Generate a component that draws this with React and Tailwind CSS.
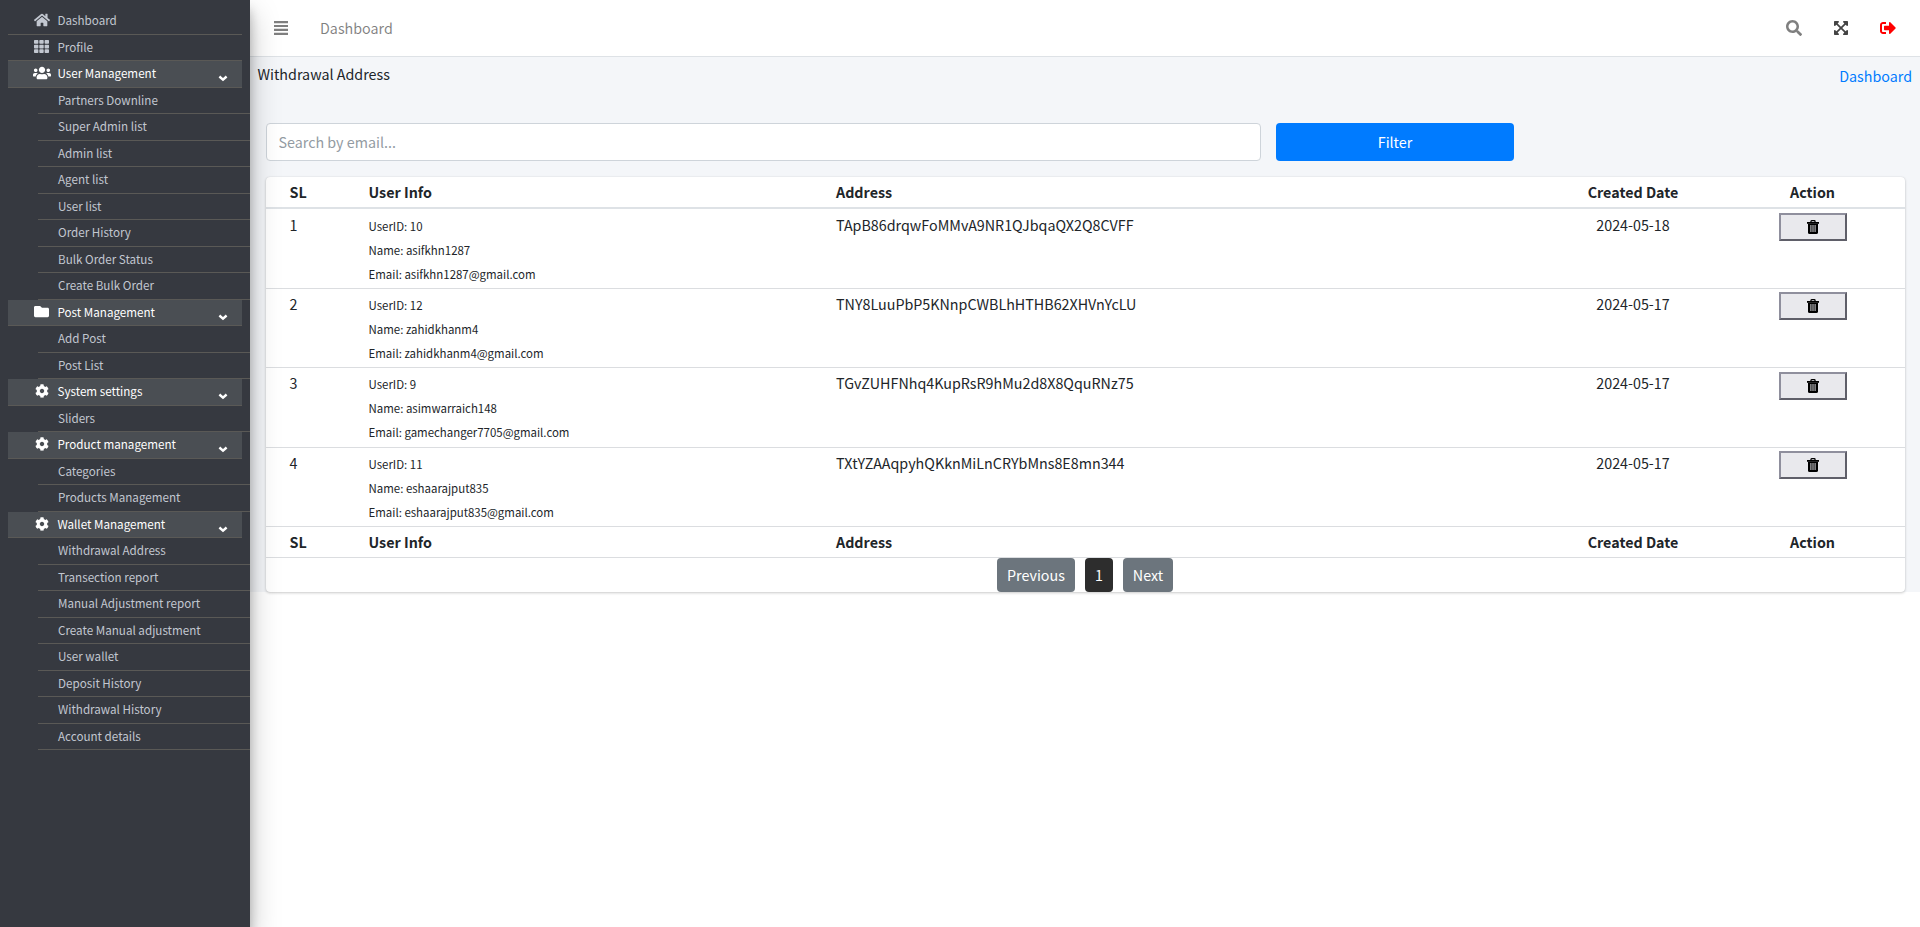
import React from 'react'
import { clsx } from 'clsx'
import {
  FaHome, FaTh, FaUsers, FaFolder, FaCog,
  FaSearch, FaExpandArrowsAlt, FaSignOutAlt,
} from 'react-icons/fa'

const MENU = [
  { label: 'Dashboard', icon: FaHome, size: 16 },
  { label: 'Profile', icon: FaTh, size: 15 },
  {
    label: 'User Management', icon: FaUsers, size: 18,
    items: ['Partners Downline', 'Super Admin list', 'Admin list', 'Agent list', 'User list',
      'Order History', 'Bulk Order Status', 'Create Bulk Order'],
  },
  { label: 'Post Management', icon: FaFolder, size: 15, items: ['Add Post', 'Post List'] },
  { label: 'System settings', icon: FaCog, size: 14, items: ['Sliders'] },
  { label: 'Product management', icon: FaCog, size: 14, items: ['Categories', 'Products Management'] },
  {
    label: 'Wallet Management', icon: FaCog, size: 14,
    items: ['Withdrawal Address', 'Transection report', 'Manual Adjustment report',
      'Create Manual adjustment', 'User wallet', 'Deposit History', 'Withdrawal History',
      'Account details'],
  },
]

const ROWS = [
  { id: 10, name: 'asifkhn1287', email: 'asifkhn1287@gmail.com', address: 'TApB86drqwFoMMvA9NR1QJbqaQX2Q8CVFF', date: '2024-05-18' },
  { id: 12, name: 'zahidkhanm4', email: 'zahidkhanm4@gmail.com', address: 'TNY8LuuPbP5KNnpCWBLhHTHB62XHVnYcLU', date: '2024-05-17' },
  { id: 9, name: 'asimwarraich148', email: 'gamechanger7705@gmail.com', address: 'TGvZUHFNhq4KupRsR9hMu2d8X8QquRNz75', date: '2024-05-17' },
  { id: 11, name: 'eshaarajput835', email: 'eshaarajput835@gmail.com', address: 'TXtYZAAqpyhQKknMiLnCRYbMns8E8mn344', date: '2024-05-17' },
]

const GRID = 'grid grid-cols-[79px_467.5px_705px_184px_175px] pl-[23.5px]'

function Chevron() {
  return (
    <svg width="10" height="7" viewBox="0 0 10 7" className="mt-[11px] mr-[14px]" fill="none" stroke="currentColor">
      <path d="M1.4 1.5L5 4.6L8.6 1.5" strokeWidth="2.4" />
    </svg>
  )
}

function MenuIcon() {
  return (
    <svg width="14" height="14" viewBox="0 0 14 14" fill="currentColor">
      <path d="M0 0H14V2.2H0ZM0 3.9H14V6.1H0ZM0 7.8H14V10H0ZM0 11.7H14V13.9H0Z" />
    </svg>
  )
}

function TrashIcon() {
  return (
    <svg width="12" height="14" viewBox="0 0 12 14">
      <path d="M4 2.4V1.3Q4 .7 4.6 .7H7.4Q8 .7 8 1.3V2.4" fill="none" stroke="currentColor" strokeWidth="1.3" />
      <path d="M0 2H12V3.8H0Z" fill="currentColor" />
      <path d="M1 3.8H11V12.4Q11 14 9.4 14H2.6Q1 14 1 12.4Z" fill="currentColor" />
      <path d="M3.9 5V12M6 5V12M8.1 5V12" stroke="#e9e9ed" strokeWidth="0.9" />
    </svg>
  )
}

function MenuGroup({ label, icon: Icon, size, items }) {
  return (
    <li>
      <a className={clsx('mx-2 flex h-[26.5px] items-center border-b border-[#5a5956] pb-[2px] pl-[22px]',
        items ? 'bg-[#4a4e53] text-white' : 'text-[#c2c7d0]')}>
        <span className="flex w-[23px] justify-center"><Icon size={size} /></span>
        <span className="ml-[4.5px] flex-1">{label}</span>
        {items && <Chevron />}
      </a>
      {items && (
        <ul className="pl-[38px]">
          {items.map(item => (
            <li key={item} className="flex h-[26.5px] items-center border-b border-[#5a5956] pb-[2px] pl-5 text-[#c2c7d0]">{item}</li>
          ))}
        </ul>
      )}
    </li>
  )
}

function Sidebar() {
  return (
    <aside className="z-10 w-[250px] shrink-0 bg-[#363940] pt-[8.4px] text-[11.65px] shadow-[0_14px_28px_rgba(0,0,0,0.25),0_10px_10px_rgba(0,0,0,0.22)]">
      <ul>{MENU.map(m => <MenuGroup key={m.label} {...m} />)}</ul>
    </aside>
  )
}

function Navbar() {
  return (
    <header className="flex h-[57px] items-center border-b border-[#dee2e6] bg-white pr-6 pl-6 text-black/50">
      <MenuIcon />
      <span className="ml-8">Dashboard</span>
      <div className="ml-auto flex items-center gap-[31px]">
        <FaSearch size={16} />
        <FaExpandArrowsAlt size={16} className="text-[#444]" />
        <FaSignOutAlt size={16} className="text-[#f00]" />
      </div>
    </header>
  )
}

function HeadCells() {
  return (
    <>
      <span>SL</span>
      <span>User Info</span>
      <span>Address</span>
      <span className="text-center">Created Date</span>
      <span className="text-center">Action</span>
    </>
  )
}

function AddressTable() {
  return (
    <div className="mt-4 h-[415px] rounded bg-white shadow-[0_0_1px_rgba(0,0,0,0.125),0_1px_3px_rgba(0,0,0,0.2)]">
      <div className={clsx(GRID, 'h-[31.6px] border-b-2 border-[#dee2e6] leading-[30px] font-bold')}><HeadCells /></div>
      {ROWS.map((r, i) => (
        <div key={r.id} className={clsx(GRID, 'h-[79.35px] leading-6', i > 0 && 'border-t border-[#dbdde0]')}>
          <span className={i > 0 ? 'pt-[3px]' : 'pt-1'}>{i + 1}</span>
          <div className={clsx('text-[11.45px]', i > 0 ? 'pt-[4.1px]' : 'pt-[5.9px]')}>
            <p>UserID: {r.id}</p>
            <p>Name: {r.name}</p>
            <p>Email: {r.email}</p>
          </div>
          <span className={i > 0 ? 'pt-[3px]' : 'pt-1'}>{r.address}</span>
          <span className={clsx('text-center', i > 0 ? 'pt-[3px]' : 'pt-1')}>{r.date}</span>
          <div className={clsx('flex justify-center', i > 0 ? 'pt-[3.4px]' : 'pt-1')}>
            <button className="flex h-7 w-[68px] items-center justify-center border-2 border-t-[#8f8f9d] border-r-[#5f5f69] border-b-[#5f5f69] border-l-[#8f8f9d] bg-[#e9e9ed] text-black">
              <TrashIcon />
            </button>
          </div>
        </div>
      ))}
      <div className={clsx(GRID, 'h-[31px] border-t border-[#dbdde0] leading-[30px] font-bold')}><HeadCells /></div>
      <div className="flex h-[35px] justify-center gap-2.5 border-t border-[#dbdde0] pr-px text-white">
        <button className="h-[34px] w-[78px] rounded bg-[#6c757d]">Previous</button>
        <button className="h-[34px] w-7 rounded bg-[#2d2d2d]">1</button>
        <button className="h-[34px] w-[50px] rounded bg-[#6c757d]">Next</button>
      </div>
    </div>
  )
}

export default function App() {
  return (
    <div className="flex h-[927px] w-full overflow-hidden bg-white font-['Noto_Sans_CJK_SC',sans-serif] text-[14.3px] text-[#212529]">
      <Sidebar />
      <div className="flex min-w-0 flex-1 flex-col">
        <Navbar />
        <main className="h-[535px] bg-[#f4f6f9]">
          <div className="flex h-[66px] justify-between px-2 pt-[5px] pl-[7.5px] leading-6">
            <h1>Withdrawal Address</h1>
            <a className="mt-0.5 text-[#007bff]">Dashboard</a>
          </div>
          <div className="px-4 pr-[15px]">
            <div className="flex gap-[15px]">
              <input placeholder="Search by email..." className="h-[38px] w-[995px] rounded border border-[#ced4da] bg-white px-[11.5px] pb-0.5 placeholder:text-[#939ba2]" />
              <button className="h-[38px] w-[238px] rounded bg-[#007bff] text-white">Filter</button>
            </div>
            <AddressTable />
          </div>
        </main>
      </div>
    </div>
  )
}
